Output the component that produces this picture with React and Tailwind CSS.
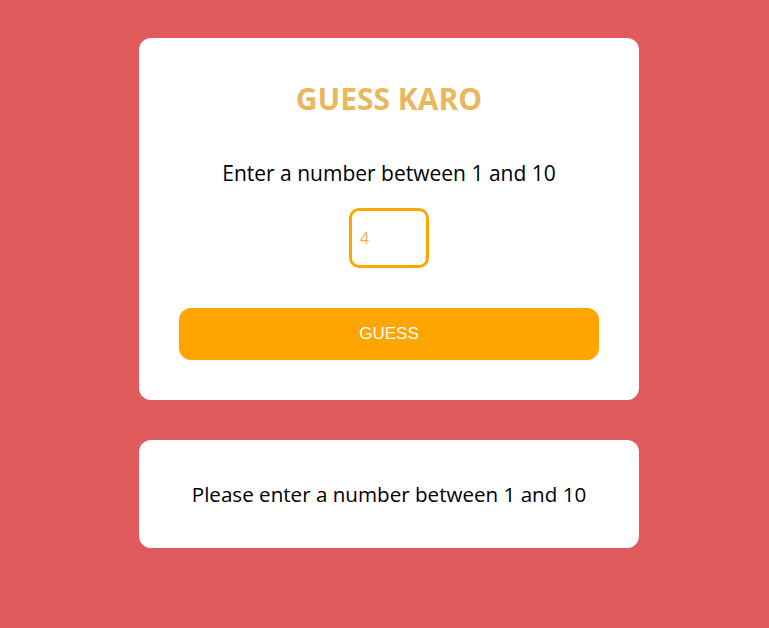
import React, { useState } from 'react';

const App = () => {
  const [guess, setGuess] = useState('4');

  return (
    <div className="min-h-[628px] w-full bg-[#e05c5c] pt-[38px] pl-[9px] font-['Open_Sans',sans-serif]">
      <div className="mx-auto flex w-[500px] flex-col items-center rounded-xl bg-white px-10 pt-[41px] pb-10">
        <h1 className="text-[30px] leading-[40px] font-bold text-[#e9b85e]">GUESS KARO</h1>
        <p className="mt-[40px] text-[21px] leading-[28px] text-black">Enter a number between 1 and 10</p>
        <input
          type="number"
          value={guess}
          onChange={(e) => setGuess(e.target.value)}
          className="mt-[21px] h-[60px] w-[80px] rounded-[10px] border-[3px] border-[#ffa500] px-[8px] text-[16px] text-[#f2b13e] outline-none"
        />
        <button className="mt-10 h-[52px] w-full rounded-xl bg-[#ffa500] text-[17px] text-white font-['Liberation_Sans',sans-serif]">
          GUESS
        </button>
      </div>

      <div className="mx-auto mt-10 flex h-[108px] w-[500px] items-center justify-center rounded-xl bg-white">
        <p className="text-[20.6px] text-black">Please enter a number between 1 and 10</p>
      </div>
    </div>
  );
};

export default App;
